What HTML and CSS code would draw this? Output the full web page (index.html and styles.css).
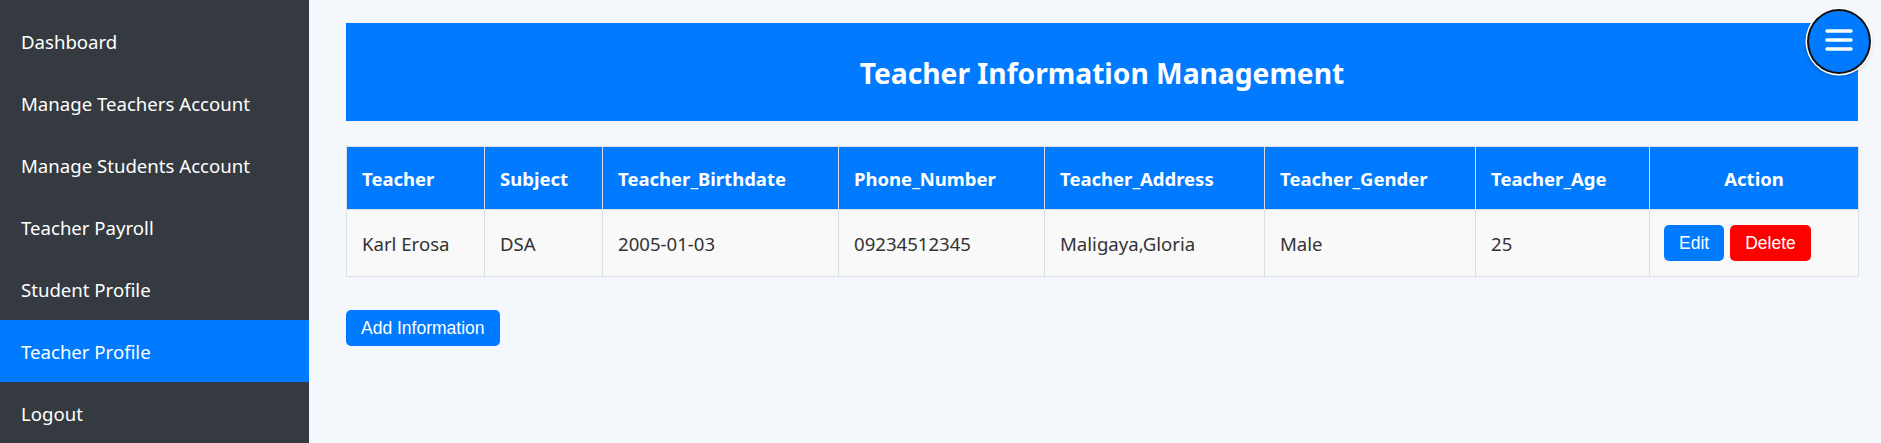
FILE: index.html
```html
<!DOCTYPE html>
<html lang="en">
<head>
<meta charset="utf-8">
<title>Teacher Information Management</title>
<link rel="stylesheet" href="styles.css">
</head>
<body>
<div class="layout">
  <nav class="sidebar">
    <a class="nav-item" href="#">Dashboard</a>
    <a class="nav-item" href="#">Manage Teachers Account</a>
    <a class="nav-item" href="#">Manage Students Account</a>
    <a class="nav-item" href="#">Teacher Payroll</a>
    <a class="nav-item" href="#">Student Profile</a>
    <a class="nav-item active" href="#">Teacher Profile</a>
    <a class="nav-item" href="#">Logout</a>
  </nav>
  <main class="main">
    <header class="banner"><h1 class="title">Teacher Information Management</h1></header>
    <table class="grid">
      <colgroup>
        <col class="c1"><col class="c2"><col class="c3"><col class="c4"><col class="c5"><col class="c6"><col class="c7"><col class="c8">
      </colgroup>
      <thead>
        <tr>
          <th>Teacher</th>
          <th>Subject</th>
          <th>Teacher_Birthdate</th>
          <th>Phone_Number</th>
          <th>Teacher_Address</th>
          <th>Teacher_Gender</th>
          <th>Teacher_Age</th>
          <th class="center">Action</th>
        </tr>
      </thead>
      <tbody>
        <tr>
          <td>Karl Erosa</td>
          <td>DSA</td>
          <td>2005-01-03</td>
          <td>09234512345</td>
          <td>Maligaya,Gloria</td>
          <td>Male</td>
          <td>25</td>
          <td class="actions"><button class="btn btn-blue">Edit</button><button class="btn btn-red">Delete</button></td>
        </tr>
      </tbody>
    </table>
    <button class="btn btn-blue add-btn">Add Information</button>
  </main>
</div>
<button class="menu-btn" aria-label="Menu">
  <svg width="28" height="22" viewBox="0 0 28 22"><path d="M2 2H26M2 11H26M2 20H26" stroke="#fff" stroke-width="3.4" stroke-linecap="round" fill="none"/></svg>
</button>
</body>
</html>
```
FILE: styles.css
```css
html, body { margin: 0; padding: 0; }
body {
  background: #f4f7fb;
  font-family: "Noto Sans", "Open Sans", sans-serif;
  height: 443px;
  overflow: hidden;
}
.layout { display: flex; height: 443px; }
.sidebar {
  width: 309px;
  flex: none;
  background: #343a40;
  padding-top: 10px;
  display: flex;
  flex-direction: column;
}
.nav-item {
  height: 62px;
  flex: none;
  display: flex;
  align-items: center;
  padding-left: 21px;
  color: #ffffff;
  text-decoration: none;
  font-size: 18.6px;
}
.nav-item.active { background: #007bff; }
.main {
  flex: 1;
  padding: 23px 23px 0 37px;
  min-width: 0;
}
.banner {
  height: 98px;
  background: #007bff;
  display: flex;
  align-items: center;
  justify-content: center;
}
.title {
  margin: 0;
  color: #fff;
  font-size: 28.2px;
  font-weight: 700;
  padding-top: 2px;
}
.grid {
  margin-top: 25px;
  width: 1512px;
  border-collapse: collapse;
  table-layout: fixed;
  border: 1px solid #dcdfe3;
}
.c1 { width: 138px; } .c2 { width: 118px; } .c3 { width: 236px; } .c4 { width: 206px; }
.c5 { width: 220px; } .c6 { width: 211px; } .c7 { width: 174px; } .c8 { width: 209px; }
.grid th {
  background: #007bff;
  color: #fff;
  font-weight: 700;
  font-size: 18.5px;
  text-align: left;
  height: 63px;
  padding: 0 0 0 15px;
  border: 1px solid #dcdfe3;
  box-sizing: border-box;
}
.grid th.center { text-align: center; padding: 0; }
.grid td {
  background: #f9f9f9;
  color: #333;
  font-size: 18.6px;
  height: 67px;
  padding: 0 0 0 15px;
  border: 1px solid #dcdfe3;
  box-sizing: border-box;
}
.grid td.actions { padding-left: 14px; }
.btn {
  font-family: "Liberation Sans", Arial, sans-serif;
  font-size: 17.5px;
  color: #fff;
  border: none;
  border-radius: 5px;
  padding: 8px 15px;
  line-height: 20px;
  cursor: pointer;
}
.btn-blue { background: #007bff; }
.btn-red { background: #ff0000; margin-left: 6px; }
.add-btn { margin-top: 33px; display: block; }
.menu-btn {
  position: fixed;
  top: 9px;
  right: 10px;
  width: 64px;
  height: 65px;
  border-radius: 50%;
  background: #007bff;
  border: 2px solid #111;
  box-shadow: 0 0 0 1.5px #fff, -1px 2px 5px rgba(0,0,0,0.25);
  display: flex;
  align-items: center;
  justify-content: center;
  padding: 0;
}
.menu-btn svg { display: block; margin-top: -4px; }
```
